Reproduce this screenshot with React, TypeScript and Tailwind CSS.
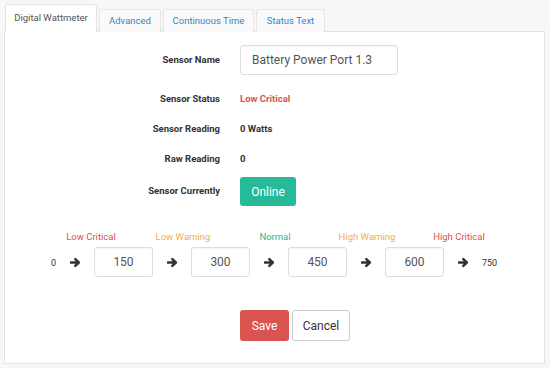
const font = { fontFamily: 'Roboto, "Liberation Sans", sans-serif' };

const tabs = [
  { name: 'Digital Wattmeter', w: 'w-[92px]', active: true },
  { name: 'Advanced', w: 'w-[62px]', active: false },
  { name: 'Continuous Time', w: 'w-[91px]', active: false },
  { name: 'Status Text', w: 'w-[69px]', active: false },
];

const levels = [
  { name: 'Low Critical', color: 'text-[#d9534f]' },
  { name: 'Low Warning', color: 'text-[#f0ad4e]' },
  { name: 'Normal', color: 'text-[#26b99a]' },
  { name: 'High Warning', color: 'text-[#f0ad4e]' },
  { name: 'High Critical', color: 'text-[#d9534f]' },
];

const limits = ['150', '300', '450', '600'];

function Row({ label, children, className }: { label: string; children: React.ReactNode; className: string }) {
  return (
    <div className={`flex items-center ${className}`}>
      <div className="w-[215px] text-right text-[9.5px] font-bold text-[#333]">{label}</div>
      <div className="ml-[20px] flex items-center">{children}</div>
    </div>
  );
}

// thick font-awesome style right arrow
function Arrow() {
  return (
    <svg viewBox="0 0 12 12" className="h-[11px] w-[11px] shrink-0 text-[#333]">
      <path
        d="M1 6H9.5M5.8 2.2L9.6 6L5.8 9.8"
        fill="none"
        stroke="currentColor"
        strokeWidth="2.7"
        strokeLinecap="round"
        strokeLinejoin="round"
      />
    </svg>
  );
}

export default function App() {
  return (
    <div className="h-[368px] w-[550px] bg-[#f7f7f7] pl-[4px] pt-[4px]" style={font}>
      <div className="relative z-10 -mb-px ml-[1px] flex h-[28px] items-end gap-[2px]">
        {tabs.map((t) =>
          t.active ? (
            <div
              key={t.name}
              className={`${t.w} flex h-[28px] items-center justify-center rounded-t-[3px] border border-b-0 border-[#e3e3e3] bg-white text-[9.5px] text-[#555]`}
            >
              {t.name}
            </div>
          ) : (
            <div
              key={t.name}
              className={`${t.w} flex h-[23px] items-center justify-center rounded-t-[3px] border border-b-0 border-[#e6e6e6] bg-[#fafafa] text-[9.5px] text-[#3a83c4]`}
            >
              {t.name}
            </div>
          )
        )}
      </div>
      <div className="h-[333px] w-[541px] border border-[#e3e3e3] bg-white">
        <div className="flex flex-col">
          <Row label="Sensor Name" className="mt-[13px] h-[30px]">
            <input
              readOnly
              value="Battery Power Port 1.3"
              className="h-[30px] w-[158px] rounded-[3px] border border-[#ddd] px-[11px] text-[12px] text-[#555] shadow-[inset_0_1px_1px_rgba(0,0,0,0.04)] outline-none"
            />
          </Row>
          <Row label="Sensor Status" className="mt-[9px] h-[30px]">
            <span className="text-[9.5px] font-bold text-[#d9534f]">Low Critical</span>
          </Row>
          <Row label="Sensor Reading" className="h-[30px]">
            <span className="text-[9.5px] font-bold text-[#333]">0 Watts</span>
          </Row>
          <Row label="Raw Reading" className="h-[30px]">
            <span className="text-[9.5px] font-bold text-[#333]">0</span>
          </Row>
          <Row label="Sensor Currently" className="mt-[3px] h-[29px]">
            <button className="flex h-[29px] w-[56px] items-center justify-center rounded-[3px] bg-[#26b99a] text-[12px] text-white">
              Online
            </button>
          </Row>
        </div>

        <div className="mt-[25px] flex h-[12px] items-center pl-[40px]">
          {levels.map((l) => (
            <div key={l.name} className={`w-[92px] text-center text-[9.5px] leading-[12px] ${l.color}`}>
              {l.name}
            </div>
          ))}
        </div>

        <div className="mt-[4px] flex h-[30px] items-center gap-[13.5px] pl-[46px]">
          <span className="mt-[3px] w-[5px] text-[9px] text-[#333]">0</span>
          {limits.map((v) => (
            <div key={v} className="flex items-center gap-[13.5px]">
              <Arrow />
              <div className="flex h-[30px] w-[59px] items-center justify-center rounded-[3px] border border-[#ddd] text-[12px] text-[#555] shadow-[inset_0_1px_1px_rgba(0,0,0,0.04)]">
                {v}
              </div>
            </div>
          ))}
          <Arrow />
          <span className="mt-[3px] text-[9px] text-[#333]">750</span>
        </div>

        <div className="mt-[33px] flex gap-[3px] pl-[235px]">
          <button className="h-[31px] w-[49px] rounded-[3px] bg-[#d9534f] text-[12px] text-white">Save</button>
          <button className="h-[31px] w-[58px] rounded-[3px] border border-[#ccc] bg-white text-[12px] text-[#333]">
            Cancel
          </button>
        </div>
      </div>
    </div>
  );
}
